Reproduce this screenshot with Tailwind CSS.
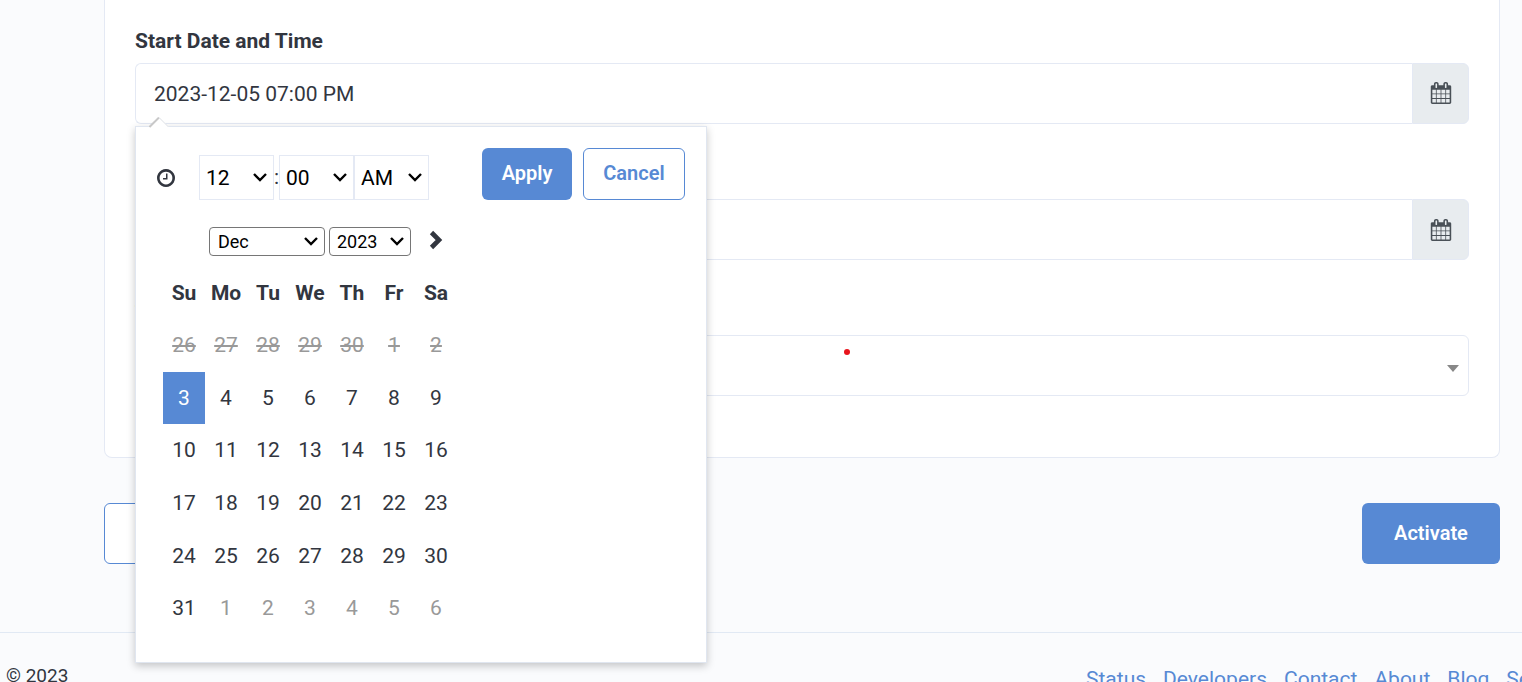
<!DOCTYPE html>
<html lang="en">
<head>
    <meta charset="UTF-8">
    <meta name="viewport" content="width=device-width, initial-scale=1.0">
    <title>Schedule</title>
    <script src="https://cdn.jsdelivr.net/npm/@tailwindcss/browser@4"></script>
</head>
<body class="h-screen overflow-hidden bg-[#fafbfd] font-[Roboto,sans-serif] text-[21px] text-[#32363f]">
    <svg class="hidden">
        <symbol id="calendar" viewBox="0 0 1792 1792">
            <path d="M192 1664h288v-288h-288v288zm352 0h320v-288h-320v288zm-352-352h288v-320h-288v320zm352 0h320v-320h-320v320zm-352-384h288v-288h-288v288zm736 736h320v-288h-320v288zm-384-736h320v-288h-320v288zm768 736h288v-288h-288v288zm-384-352h320v-320h-320v320zm-352-864v-288q0-13-9.5-22.5t-22.5-9.5h-64q-13 0-22.5 9.5t-9.5 22.5v288q0 13 9.5 22.5t22.5 9.5h64q13 0 22.5-9.5t9.5-22.5zm736 864h288v-320h-288v320zm-384-384h320v-288h-320v288zm384 0h288v-288h-288v288zm32-480v-288q0-13-9.5-22.5t-22.5-9.5h-64q-13 0-22.5 9.5t-9.5 22.5v288q0 13 9.5 22.5t22.5 9.5h64q13 0 22.5-9.5t9.5-22.5zm384-64v1280q0 52-38 90t-90 38h-1408q-52 0-90-38t-38-90v-1280q0-52 38-90t90-38h128v-96q0-66 47-113t113-47h64q66 0 113 47t47 113v96h384v-96q0-66 47-113t113-47h64q66 0 113 47t47 113v96h128q52 0 90 38t38 90z"/>
        </symbol>
        <symbol id="arrow" viewBox="0 0 14 9">
            <path d="M1 1L7 7L13 1" fill="none" stroke="#000" stroke-width="2.4"/>
        </symbol>
    </svg>

    <main class="ml-[104px] mr-[22px]">
        <form id="scheduleForm">
            <div class="bg-white border border-t-0 border-[#e4e9f4] rounded-b-lg px-[30px] pt-[26px] pb-[61px] flex flex-col gap-[38px]">
                <div>
                    <label class="block font-bold leading-[30px] mb-[7px]" for="start">Start Date and Time</label>
                    <div class="relative flex h-[61px]">
                        <input class="grow min-w-0 bg-white border border-r-0 border-[#e4e9f4] rounded-l-md px-[18px] pt-[2px] focus:outline-none" id="start" type="text" value="2023-12-05 07:00 PM">
                        <button class="w-[57px] bg-[#e8ecef] border border-[#e4e9f4] rounded-r-md flex justify-center items-center pb-[2px]" type="button" aria-label="Open start calendar">
                            <svg class="size-[22px] fill-[#495057]"><use href="#calendar"/></svg>
                        </button>

                        <!-- Date picker -->
                        <div class="absolute z-10 top-[63px] left-0 w-[572px] bg-white border border-[#e0e6f0] shadow-[0_3px_8px_rgba(0,0,0,0.22)] pt-[21px] pb-[27px] px-[21px]">
                            <svg class="absolute -top-[10px] left-[13px] w-5 h-[11px]" viewBox="0 0 20 11">
                                <path d="M0 10L10 0L20 10V11H0Z" fill="#fff"/>
                                <path d="M0.5 10L10 0.5" fill="none" stroke="#c8c8c8" stroke-width="2"/>
                                <path d="M10 0.5L19.5 10" fill="none" stroke="#dcdfe4" stroke-width="1"/>
                            </svg>
                            <div class="flex justify-between">
                                <div class="flex items-center pt-[7px] h-[52px]">
                                    <svg class="size-[18px] mr-6 fill-[#32363f]" viewBox="128 128 1536 1536">
                                        <path d="M1024 544v448q0 14-9 23t-23 9h-320q-14 0-23-9t-9-23v-64q0-14 9-23t23-9h224v-352q0-14 9-23t23-9h64q14 0 23 9t9 23zm416 352q0-148-73-273t-198-198-273-73-273 73-198 198-73 273 73 273 198 198 273 73 273-73 198-198 73-273zm224 0q0 209-103 385.5t-279.5 279.5-385.5 103-385.5-103-279.5-279.5-103-385.5 103-385.5 279.5-279.5 385.5-103 385.5 103 279.5 279.5 103 385.5z"/>
                                    </svg>
                                    <div class="relative">
                                        <select class="block appearance-none w-[75px] h-[45px] border border-[#e4e9f4] bg-white text-black px-[6px] pt-[2px]" aria-label="Hour"><option>12</option></select>
                                        <svg class="absolute right-[7px] top-[18px] w-[14px] h-[9px] pointer-events-none"><use href="#arrow"/></svg>
                                    </div>
                                    <span class="w-[5px] text-center">:</span>
                                    <div class="relative">
                                        <select class="block appearance-none w-[75px] h-[45px] border border-[#e4e9f4] bg-white text-black px-[6px] pt-[2px]" aria-label="Minute"><option>00</option></select>
                                        <svg class="absolute right-[7px] top-[18px] w-[14px] h-[9px] pointer-events-none"><use href="#arrow"/></svg>
                                    </div>
                                    <div class="relative">
                                        <select class="block appearance-none w-[75px] h-[45px] border border-[#e4e9f4] bg-white text-black px-[6px] pt-[2px]" aria-label="AM or PM"><option>AM</option></select>
                                        <svg class="absolute right-[7px] top-[18px] w-[14px] h-[9px] pointer-events-none"><use href="#arrow"/></svg>
                                    </div>
                                </div>
                                <div class="flex gap-[11px]">
                                    <button class="w-[90px] h-[52px] pb-[2px] bg-[#5789d4] hover:bg-blue-700 text-white text-xl font-semibold rounded-md" type="button">Apply</button>
                                    <button class="w-[102px] h-[52px] pb-[2px] bg-white border border-[#5789d4] text-[#5789d4] text-xl font-semibold rounded-md" type="button">Cancel</button>
                                </div>
                            </div>
                            <table class="table-fixed w-[294px] h-[420px] mt-[15px] ml-[6px] text-center">
                                <thead>
                                    <tr class="h-[52px]">
                                        <th></th>
                                        <th colspan="5" class="font-normal p-0">
                                            <div class="flex justify-center gap-1">
                                                <div class="relative">
                                                    <select class="block appearance-none w-[116px] h-[29px] border border-[#767676] rounded-sm bg-white text-black text-lg leading-none px-2 pt-[2px]" aria-label="Month"><option>Dec</option></select>
                                                    <svg class="absolute right-[7px] top-[10px] w-[14px] h-[9px] pointer-events-none"><use href="#arrow"/></svg>
                                                </div>
                                                <div class="relative">
                                                    <select class="block appearance-none w-[82px] h-[29px] border border-[#767676] rounded-sm bg-white text-black text-lg leading-none px-[7px] pt-[2px]" aria-label="Year"><option>2023</option></select>
                                                    <svg class="absolute right-[7px] top-[10px] w-[14px] h-[9px] pointer-events-none"><use href="#arrow"/></svg>
                                                </div>
                                            </div>
                                        </th>
                                        <th class="p-0 pb-[2px]">
                                            <button class="block mx-auto" type="button" aria-label="Next month">
                                                <svg class="w-[14px] h-5" viewBox="0 0 14 20" fill="none" stroke="#32363f" stroke-width="4.6"><path d="M2.5 2.5L10 10L2.5 17.5"/></svg>
                                            </button>
                                        </th>
                                    </tr>
                                    <tr class="h-[52px]">
                                        <th class="p-0 pt-[2px]">Su</th>
                                        <th class="p-0 pt-[2px]">Mo</th>
                                        <th class="p-0 pt-[2px]">Tu</th>
                                        <th class="p-0 pt-[2px]">We</th>
                                        <th class="p-0 pt-[2px]">Th</th>
                                        <th class="p-0 pt-[2px]">Fr</th>
                                        <th class="p-0 pt-[2px]">Sa</th>
                                    </tr>
                                </thead>
                                <tbody id="days"></tbody>
                            </table>
                        </div>
                    </div>
                </div>

                <div>
                    <label class="block font-bold leading-[30px] mb-[7px]" for="end">End Date</label>
                    <div class="flex h-[61px]">
                        <input class="grow min-w-0 bg-white border border-r-0 border-[#e4e9f4] rounded-l-md px-[18px] pt-[2px] focus:outline-none" id="end" type="text">
                        <button class="w-[57px] bg-[#e8ecef] border border-[#e4e9f4] rounded-r-md flex justify-center items-center" type="button" aria-label="Open end calendar">
                            <svg class="size-[22px] fill-[#495057]"><use href="#calendar"/></svg>
                        </button>
                    </div>
                </div>

                <div>
                    <label class="block font-bold leading-[30px] mb-[7px]" for="zone">Time Zone</label>
                    <div class="relative h-[61px]">
                        <select class="appearance-none w-full h-full bg-white border border-[#e4e9f4] rounded-md px-[18px]" id="zone"><option></option></select>
                        <svg class="absolute right-[10px] top-[30px] w-3 h-[7px] fill-[#888888] pointer-events-none" viewBox="0 0 12 7"><path d="M0 0H12L6 7Z"/></svg>
                        <span class="absolute left-[709px] top-[14px] size-[6px] rounded-full bg-[#e8141c]"></span>
                    </div>
                </div>
            </div>

            <div class="flex justify-between mt-[45px]">
                <button class="w-[138px] h-[61px] bg-white border border-[#5789d4] rounded-md" type="button" aria-label="Back"></button>
                <button class="w-[138px] h-[61px] pb-[2px] bg-[#5789d4] hover:bg-blue-700 text-white text-xl font-semibold rounded-md" type="submit">Activate</button>
            </div>
        </form>
    </main>

    <footer class="mt-[68px] border-t border-[#e1e9f4] pt-7 pl-[6px] flex justify-between leading-[30px]">
        <p class="text-[19px] leading-[30px]">© 2023</p>
        <nav class="w-[436px] pt-[3px] flex gap-[17px] overflow-hidden whitespace-nowrap text-[#5789d4]">
            <a href="#">Status</a>
            <a href="#">Developers</a>
            <a href="#">Contact</a>
            <a href="#">About</a>
            <a href="#">Blog</a>
            <a href="#">Security</a>
        </nav>
    </footer>

    <script>
        const days = document.getElementById('days');

        // December 2023 starts on a Friday, so the grid begins on Nov 26
        for (let week = 0; week < 6; week++) {
            const row = document.createElement('tr');
            row.className = 'h-[52px]';
            for (let d = 0; d < 7; d++) {
                const date = new Date(2023, 10, 26 + week * 7 + d);
                const cell = document.createElement('td');
                cell.textContent = date.getDate();
                if (week === 0) {
                    cell.className = 'p-0 pt-px text-[#999999] line-through';
                } else if (week === 1 && d === 0) {
                    cell.className = 'p-0 pt-px bg-[#5789d4] text-white';
                } else if (date.getMonth() !== 11) {
                    cell.className = 'p-0 pt-px text-[#999999]';
                } else {
                    cell.className = 'p-0 pt-px';
                }
                row.appendChild(cell);
            }
            days.appendChild(row);
        }

        document.getElementById('scheduleForm').addEventListener('submit', (e) => {
            e.preventDefault();
        });
    </script>
</body>
</html>
